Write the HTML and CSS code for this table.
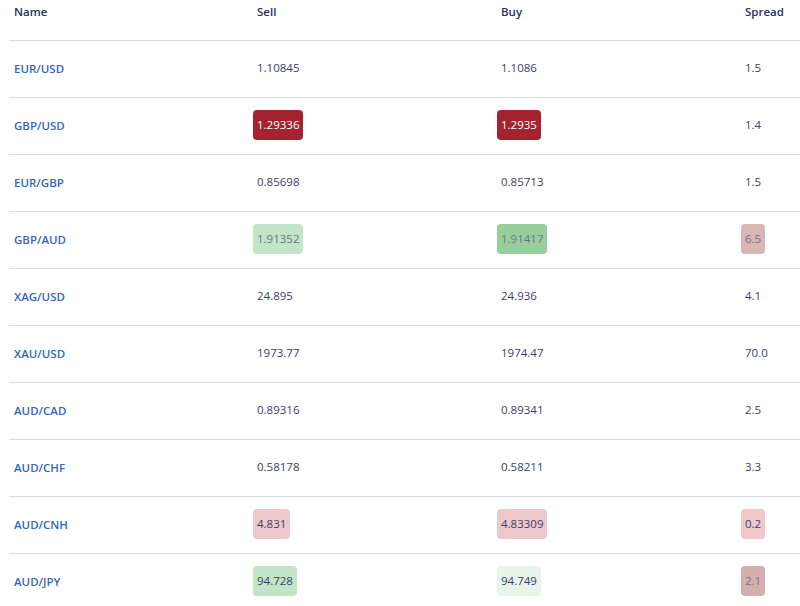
FILE: index.html
```html
<!DOCTYPE html>
<html>
<head>
<meta charset="utf-8">
<link rel="stylesheet" href="styles.css">
</head>
<body>
<div class="table">
  <div class="row head">
    <div class="cell">Name</div>
    <div class="cell"><span class="v">Sell</span></div>
    <div class="cell"><span class="v">Buy</span></div>
    <div class="cell"><span class="v">Spread</span></div>
  </div>
  <div class="row">
    <div class="cell name">EUR/USD</div>
    <div class="cell"><span class="v">1.10845</span></div>
    <div class="cell"><span class="v">1.1086</span></div>
    <div class="cell"><span class="v">1.5</span></div>
  </div>
  <div class="row">
    <div class="cell name">GBP/USD</div>
    <div class="cell"><span class="v red">1.29336</span></div>
    <div class="cell"><span class="v red">1.2935</span></div>
    <div class="cell"><span class="v">1.4</span></div>
  </div>
  <div class="row">
    <div class="cell name">EUR/GBP</div>
    <div class="cell"><span class="v">0.85698</span></div>
    <div class="cell"><span class="v">0.85713</span></div>
    <div class="cell"><span class="v">1.5</span></div>
  </div>
  <div class="row">
    <div class="cell name">GBP/AUD</div>
    <div class="cell"><span class="v green-l faded">1.91352</span></div>
    <div class="cell"><span class="v green faded">1.91417</span></div>
    <div class="cell"><span class="v rose faded">6.5</span></div>
  </div>
  <div class="row">
    <div class="cell name">XAG/USD</div>
    <div class="cell"><span class="v">24.895</span></div>
    <div class="cell"><span class="v">24.936</span></div>
    <div class="cell"><span class="v">4.1</span></div>
  </div>
  <div class="row">
    <div class="cell name">XAU/USD</div>
    <div class="cell"><span class="v">1973.77</span></div>
    <div class="cell"><span class="v">1974.47</span></div>
    <div class="cell"><span class="v">70.0</span></div>
  </div>
  <div class="row">
    <div class="cell name">AUD/CAD</div>
    <div class="cell"><span class="v">0.89316</span></div>
    <div class="cell"><span class="v">0.89341</span></div>
    <div class="cell"><span class="v">2.5</span></div>
  </div>
  <div class="row">
    <div class="cell name">AUD/CHF</div>
    <div class="cell"><span class="v">0.58178</span></div>
    <div class="cell"><span class="v">0.58211</span></div>
    <div class="cell"><span class="v">3.3</span></div>
  </div>
  <div class="row">
    <div class="cell name">AUD/CNH</div>
    <div class="cell"><span class="v pink">4.831</span></div>
    <div class="cell"><span class="v pink">4.83309</span></div>
    <div class="cell"><span class="v pink">0.2</span></div>
  </div>
  <div class="row">
    <div class="cell name">AUD/JPY</div>
    <div class="cell"><span class="v green-l">94.728</span></div>
    <div class="cell"><span class="v green-xl">94.749</span></div>
    <div class="cell"><span class="v rose2 faded">2.1</span></div>
  </div>
</div>
</body>
</html>
```
FILE: styles.css
```css
html, body {
  margin: 0;
  padding: 0;
  background: #ffffff;
}
body {
  font-family: "Open Sans", "Liberation Sans", sans-serif;
  font-size: 11.5px;
  color: #3a3e6c;
  overflow: hidden;
}
.table {
  padding-left: 9px;
}
.row {
  box-sizing: border-box;
  display: grid;
  grid-template-columns: 239px 244px 244px 1fr;
  height: 57px;
  padding-bottom: 2px;
  align-items: center;
  border-bottom: 1px solid #d6dde0;
}
.row.head {
  height: 41px;
  padding-bottom: 0;
  align-items: start;
  font-weight: 600;
  color: #2c2f5e;
}
.row.head .cell {
  padding-top: 4px;
  line-height: 16px;
}
.cell {
  padding-left: 5px;
}
.name {
  color: #3466bb;
  font-weight: 600;
}
.v {
  display: inline-block;
  padding: 0 4px;
  line-height: 16px;
}
.row:not(.head) .v {
  padding-top: 7px;
  padding-bottom: 7px;
  border-radius: 4px;
}
.red {
  background: #a3242f;
  color: #ffffff;
}
.green-l {
  background: #c2e5c7;
}
.green {
  background: #96cf9c;
}
.green-xl {
  background: #e9f5eb;
}
.rose {
  background: #d9b5b4;
}
.rose2 {
  background: #d6aeae;
}
.pink {
  background: #efc8cb;
}
.faded {
  color: #70718f;
}
```
